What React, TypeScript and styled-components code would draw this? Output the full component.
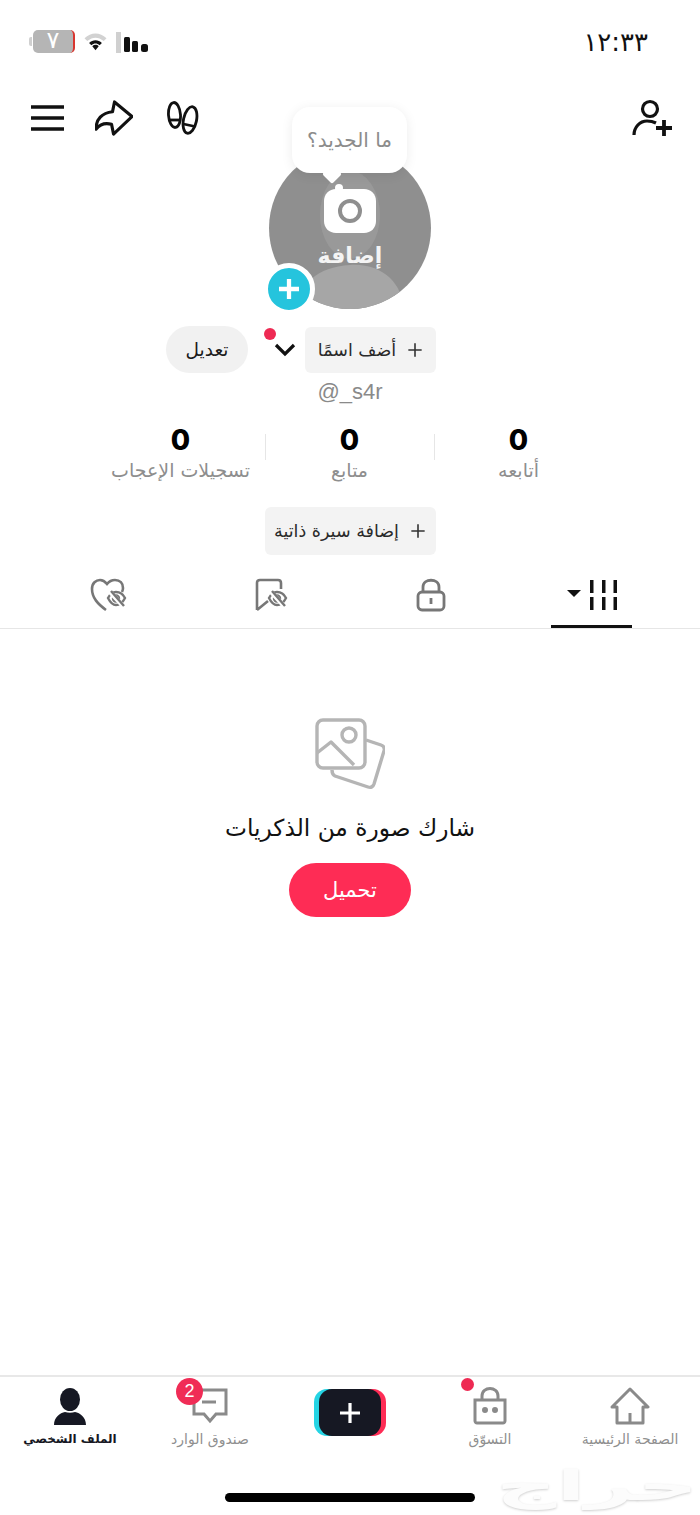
import styled, { createGlobalStyle } from 'styled-components';

const GlobalStyle = createGlobalStyle`
  html, body {
    margin: 0;
    padding: 0;
    background: #fff;
  }
  body {
    font-family: "Liberation Sans", "DejaVu Sans", sans-serif;
  }
`;

const Page = styled.div`
  position: relative;
  width: 700px;
  height: 1515px;
  overflow: hidden;
  display: flex;
  flex-direction: column;
  background: #fff;
`;

const StatusBar = styled.div`
  height: 90px;
  box-sizing: border-box;
  padding: 30px 52px 0 33px;
  display: flex;
  justify-content: space-between;
  align-items: flex-start;
`;

const StatusIcons = styled.div`
  display: flex;
  align-items: center;
  gap: 8px;
`;

const Battery = styled.div`
  position: relative;
  width: 42px;
  height: 23px;
  box-sizing: border-box;
  border-radius: 5px;
  border-right: 2px solid #d8362f;
  background: #b5b5b5;
  color: #fff;
  font-family: "DejaVu Sans", sans-serif;
  font-size: 24px;
  line-height: 20px;
  text-align: center;
  overflow: visible;

  &::before {
    content: '';
    position: absolute;
    left: -4px;
    top: 7px;
    width: 3px;
    height: 9px;
    border-radius: 2px 0 0 2px;
    background: #d0d0d0;
  }
`;

const Clock = styled.div`
  font-family: "DejaVu Sans", sans-serif;
  font-size: 26px;
  line-height: 24px;
  color: #111;
  letter-spacing: 2px;
`;

const TopBar = styled.div`
  height: 56px;
  padding: 0 28px 0 31px;
  display: flex;
  justify-content: space-between;
  align-items: center;
`;

const TopLeft = styled.div`
  display: flex;
  align-items: center;
  gap: 31px;
`;

const Profile = styled.div`
  display: flex;
  flex-direction: column;
  align-items: center;
`;

const AvatarWrap = styled.div`
  position: relative;
  width: 162px;
  height: 162px;
  margin-top: 1px;
`;

const Avatar = styled.div`
  position: relative;
  width: 162px;
  height: 162px;
  border-radius: 50%;
  overflow: hidden;
  background: #8f8f8f;
`;

const Silhouette = styled.svg`
  position: absolute;
  inset: 0;
`;

const AvatarContent = styled.div`
  position: absolute;
  inset: 0;
  padding-top: 36px;
  box-sizing: border-box;
  display: flex;
  flex-direction: column;
  align-items: center;
  gap: 9px;
`;

const AvatarLabel = styled.div`
  font-family: "DejaVu Sans", sans-serif;
  font-size: 22px;
  font-weight: 700;
  line-height: 28px;
  color: #f4f4f4;
`;

const Bubble = styled.div`
  position: absolute;
  top: -40px;
  left: 23px;
  width: 115px;
  height: 66px;
  border-radius: 18px;
  background: #fff;
  box-shadow: 0 2px 12px rgba(0, 0, 0, 0.08);
  display: flex;
  align-items: center;
  justify-content: center;
  font-family: "DejaVu Sans", sans-serif;
  font-size: 20px;
  color: #8c8c8c;
  white-space: nowrap;

  &::after {
    content: '';
    position: absolute;
    left: 33px;
    bottom: -8px;
    width: 14px;
    height: 14px;
    background: #fff;
    transform: rotate(45deg);
    border-radius: 2px;
  }
`;

const AddBadge = styled.div`
  position: absolute;
  left: -6px;
  bottom: -6px;
  width: 52px;
  height: 52px;
  box-sizing: border-box;
  border: 5.5px solid #fff;
  border-radius: 50%;
  background: #25c4dd;
  display: flex;
  align-items: center;
  justify-content: center;
`;

const NameRow = styled.div`
  width: 270px;
  margin-top: 17px;
  margin-right: 98px;
  display: flex;
  align-items: center;
  justify-content: space-between;
`;

const EditPill = styled.div`
  width: 82px;
  height: 47px;
  border-radius: 24px;
  background: #f1f1f1;
  display: flex;
  align-items: center;
  justify-content: center;
  font-family: "DejaVu Sans", sans-serif;
  font-size: 18.5px;
  font-weight: 500;
  color: #1a1a1a;
`;

const Chevron = styled.div`
  position: relative;
  width: 22px;
  height: 16px;
  margin-left: 26px;
  margin-right: 9px;

  &::before {
    content: '';
    position: absolute;
    left: -10px;
    top: -14px;
    width: 12px;
    height: 12px;
    border-radius: 50%;
    background: #ee2a53;
  }
`;

const Chip = styled.div<{ $width: number; $height: number }>`
  width: ${({ $width }) => $width}px;
  height: ${({ $height }) => $height}px;
  box-sizing: border-box;
  border-radius: 6px;
  background: #f3f3f3;
  display: flex;
  align-items: center;
  justify-content: center;
  gap: 11px;
  font-family: "DejaVu Sans", sans-serif;
  font-size: 17.5px;
  color: #2a2a2a;
  white-space: nowrap;
`;

const Handle = styled.div`
  margin-top: 6px;
  font-size: 22px;
  line-height: 26px;
  color: #8a8a8a;
`;

const Stats = styled.div`
  margin-top: 19px;
  margin-right: 1px;
  display: grid;
  grid-template-columns: repeat(3, 169px);
  justify-content: center;
`;

const Stat = styled.div`
  position: relative;
  display: flex;
  flex-direction: column;
  align-items: center;

  & + &::before {
    content: '';
    position: absolute;
    left: 0;
    top: 10px;
    width: 1px;
    height: 26px;
    background: #e6e6e6;
  }
`;

const StatValue = styled.div`
  font-family: Inter, "Liberation Sans", sans-serif;
  font-size: 28px;
  font-weight: 800;
  line-height: 32px;
  color: #000;
`;

const StatLabel = styled.div`
  font-family: "DejaVu Sans", sans-serif;
  font-size: 19px;
  line-height: 28px;
  color: #8e8e8e;
  white-space: nowrap;
`;

const BioWrap = styled.div`
  margin-top: 23px;
`;

const Tabs = styled.div`
  margin-top: 19px;
  height: 54px;
  padding: 0 28px;
  border-bottom: 1px solid #e6e6e6;
  display: grid;
  grid-template-columns: repeat(4, 161px);
`;

const Tab = styled.div<{ $active?: boolean; $offset?: number }>`
  position: relative;
  display: flex;
  align-items: center;
  justify-content: center;
  padding-bottom: 12px;
  padding-left: ${({ $offset }) => $offset ?? 0}px;

  ${({ $active }) =>
    $active &&
    `
    &::after {
      content: '';
      position: absolute;
      left: 40px;
      bottom: 0;
      width: 81px;
      height: 3px;
      background: #111;
    }
  `}
`;

const Empty = styled.div`
  flex: 1;
  padding-top: 89px;
  display: flex;
  flex-direction: column;
  align-items: center;
`;

const EmptyTitle = styled.div`
  margin-top: 20px;
  font-family: "DejaVu Sans", sans-serif;
  font-size: 23.3px;
  line-height: 36px;
  color: #111;
`;

const UploadButton = styled.div`
  margin-top: 17px;
  width: 122px;
  height: 54px;
  border-radius: 27px;
  background: #fe2c55;
  color: #fff;
  display: flex;
  align-items: center;
  justify-content: center;
  font-family: "DejaVu Sans", sans-serif;
  font-size: 21px;
`;

const BottomNav = styled.div`
  height: 140px;
  box-sizing: border-box;
  border-top: 2px solid #e8e8e8;
  display: grid;
  grid-template-columns: repeat(5, 140px);
`;

const NavItem = styled.div<{ $active?: boolean }>`
  position: relative;
  padding-top: 9px;
  display: flex;
  flex-direction: column;
  align-items: center;
  color: ${({ $active }) => ($active ? '#161823' : '#8f8f8f')};
`;

const NavIcon = styled.div`
  position: relative;
  height: 40px;
  display: flex;
  align-items: center;
  justify-content: center;
`;

const NavLabel = styled.div<{ $active?: boolean }>`
  margin-top: 2px;
  font-family: "DejaVu Sans", sans-serif;
  font-size: ${({ $active }) => ($active ? 12 : 14)}px;
  font-weight: ${({ $active }) => ($active ? 700 : 400)};
  line-height: 22px;
  white-space: nowrap;
`;

const CreateButton = styled.div`
  margin-top: 3px;
  width: 62px;
  height: 47px;
  border-radius: 13px;
  background: #161823;
  box-shadow: -5px 0 0 #25d4e4, 5px 0 0 #fe2c55;
  display: flex;
  align-items: center;
  justify-content: center;
`;

const CountBadge = styled.div`
  position: absolute;
  left: -16px;
  top: -8px;
  width: 27px;
  height: 27px;
  border-radius: 50%;
  background: #f02c56;
  color: #fff;
  font-size: 18px;
  font-weight: 500;
  line-height: 27px;
  text-align: center;
`;

const NavDot = styled.div`
  position: absolute;
  left: -12px;
  top: -8px;
  width: 13px;
  height: 13px;
  border-radius: 50%;
  background: #ee2a53;
`;

const HomeIndicator = styled.div`
  position: absolute;
  left: 225px;
  top: 1493px;
  width: 250px;
  height: 9px;
  border-radius: 5px;
  background: #000;
`;

const Watermark = styled.div`
  position: absolute;
  left: 502px;
  top: 1456px;
  width: 190px;
  text-align: center;
  font-family: "DejaVu Sans", sans-serif;
  font-size: 48px;
  font-weight: 700;
  line-height: 60px;
  color: #fcfcfc;
  text-shadow: 0 1px 2px #cfcfcf;
  transform: scale(1.75, 0.85);
`;

const Plus = ({ size = 16, color = '#333', width = 1.8 }: { size?: number; color?: string; width?: number }) => (
  <svg width={size} height={size} viewBox="0 0 18 18" fill="none" stroke={color} strokeWidth={width}>
    <path d="M9 1.5v15M1.5 9h15" />
  </svg>
);

const Scribble = ({ x, y }: { x: number; y: number }) => (
  <g transform={`translate(${x} ${y})`} stroke="#777" strokeWidth="2.4" fill="#fff">
    <path d="M0 7c3-5 6-7 9-7 4 0 7 3 10 7-3 5-6 8-10 8-3 0-7-3-9-8z" stroke="none" />
    <path d="M1 7c2-4 5-6 8-6s7 2 9 6c-2 4-5 7-9 7s-6-3-8-7z" />
    <circle cx="9" cy="7.5" r="3" />
    <path d="M3 1l13 14" stroke="#fff" strokeWidth="4.5" />
    <path d="M4 0l13 15" />
  </g>
);

export default function App() {
  return (
    <Page>
      <GlobalStyle />
      <StatusBar>
        <StatusIcons>
          <Battery>٧</Battery>
          <svg width="25" height="22" viewBox="0 0 26 24">
            <path d="M1 8c7-7 17-7 24 0l-3 3C16 6 10 6 4 11z" fill="#d2d2d2" />
            <path d="M6 13c4-4 10-4 14 0l-2.500 2.500c-3-2.500-6-2.500-9 0z" fill="#111" />
            <path d="M9.500 16.500c2-2 5-2 7 0L13 21z" fill="#111" />
          </svg>
          <svg width="33" height="22" viewBox="0 0 33 22">
            <rect x="0" y="1" width="5" height="21" fill="#d0d0d0" />
            <rect x="8" y="6" width="6" height="15" rx="1.500" fill="#111" />
            <rect x="16" y="10" width="6" height="11" rx="1.500" fill="#111" />
            <rect x="25" y="13" width="7" height="8" rx="2.500" fill="#111" />
          </svg>
        </StatusIcons>
        <Clock>١٢:٣٣</Clock>
      </StatusBar>

      <TopBar>
        <TopLeft>
          <svg width="33" height="26" viewBox="0 0 33 26" stroke="#111" strokeWidth="3.600">
            <path d="M0 2h33M0 13h33M0 24h33" />
          </svg>
          <svg width="38" height="36" viewBox="0 0 39 37" fill="none" stroke="#111" strokeWidth="3.200" strokeLinejoin="round">
            <path d="M20 2l18 15-19 18-2-10c-7-2-12 0-16 5 0-10 6-17 17-18z" />
          </svg>
          <svg width="36" height="34" viewBox="0 0 36 34" fill="none" stroke="#111" strokeWidth="2.800">
            <ellipse cx="10.500" cy="14" rx="6" ry="12.500" transform="rotate(-4 10.500 14)" />
            <path d="M5 19h11" />
            <ellipse cx="26" cy="19" rx="6.500" ry="13.500" transform="rotate(12 26 19)" />
            <path d="M19.500 23l11.500 2.500" />
          </svg>
        </TopLeft>
        <svg width="40" height="38" viewBox="0 0 40 38" fill="none" stroke="#111" strokeWidth="3.200">
          <circle cx="18" cy="10" r="7.500" />
          <path d="M2 36c0-8 6-14 13-14 4 0 7 1 9 2" />
          <path d="M32 21v16M24 29h16" strokeWidth="3.800" />
        </svg>
      </TopBar>

      <Profile>
        <AvatarWrap>
          <Avatar>
            <Silhouette width="162" height="162" viewBox="0 0 162 162">
              <ellipse cx="81" cy="68" rx="30" ry="44" fill="#999" />
              <path d="M28 162c2-25 20-42 53-44s52 19 54 44z" fill="#a6a6a6" />
            </Silhouette>
            <AvatarContent>
              <svg width="52" height="50" viewBox="0 0 52 50">
                <circle cx="15" cy="5" r="4" fill="#fff" />
                <path d="M12 6h28c7 0 12 5 12 12v20c0 7-5 12-12 12H12C5 50 0 45 0 38V18C0 11 5 6 12 6z" fill="#fff" />
                <circle cx="26" cy="28" r="10" fill="none" stroke="#8f8f8f" strokeWidth="4" />
              </svg>
              <AvatarLabel>إضافة</AvatarLabel>
            </AvatarContent>
          </Avatar>
          <Bubble>ما الجديد؟</Bubble>
          <AddBadge>
            <Plus size={24} color="#fff" width={3.200} />
          </AddBadge>
        </AvatarWrap>

        <NameRow>
          <EditPill>تعديل</EditPill>
          <Chevron>
            <svg width="22" height="16" viewBox="0 0 22 16" fill="none" stroke="#111" strokeWidth="3.200">
              <path d="M2 3l9 9 9-9" />
            </svg>
          </Chevron>
          <Chip $width={131} $height={46}>
            <span>أضف اسمًا</span>
            <Plus />
          </Chip>
        </NameRow>

        <Handle>@_s4r</Handle>

        <Stats>
          <Stat>
            <StatValue>0</StatValue>
            <StatLabel>تسجيلات الإعجاب</StatLabel>
          </Stat>
          <Stat>
            <StatValue>0</StatValue>
            <StatLabel>متابع</StatLabel>
          </Stat>
          <Stat>
            <StatValue>0</StatValue>
            <StatLabel>أتابعه</StatLabel>
          </Stat>
        </Stats>

        <BioWrap>
          <Chip $width={171} $height={48}>
            <span>إضافة سيرة ذاتية</span>
            <Plus />
          </Chip>
        </BioWrap>
      </Profile>

      <Tabs>
        <Tab>
          <svg width="38" height="34" viewBox="0 0 38 34" fill="none" stroke="#777" strokeWidth="2.600">
            <path d="M16 32C8 26 2 20 2 11 2 5 6 2 10 2c3 0 5 1.500 7 4 2-2.500 4-4 8-4 5 0 8 3 8 8 0 2-.5 3-1 4" />
            <Scribble x={17} y={13} />
          </svg>
        </Tab>
        <Tab $offset={6}>
          <svg width="36" height="34" viewBox="0 0 36 34" fill="none" stroke="#777" strokeWidth="2.600">
            <path d="M2 32V5c0-2 1-3 3-3h18c2 0 3 1 3 3v6M2 32l11-9" />
            <Scribble x={13} y={13} />
          </svg>
        </Tab>
        <Tab>
          <svg width="30" height="34" viewBox="0 0 30 34" fill="none" stroke="#777" strokeWidth="2.800">
            <rect x="2" y="14" width="26" height="18" rx="4" />
            <path d="M7 14V9c0-9 16-9 16 0v5" />
            <path d="M15 20v6" />
          </svg>
        </Tab>
        <Tab $active>
          <svg width="50" height="32" viewBox="0 0 50 32" fill="#111">
            <path d="M0 11h14l-7 7z" />
            <rect x="23" y="1" width="3.500" height="13" />
            <rect x="35" y="1" width="3.500" height="13" />
            <rect x="46.500" y="1" width="3.500" height="13" />
            <rect x="23" y="18" width="3.500" height="13" />
            <rect x="35" y="18" width="3.500" height="13" />
            <rect x="46.500" y="18" width="3.500" height="13" />
          </svg>
        </Tab>
      </Tabs>

      <Empty>
        <svg width="70" height="72" viewBox="0 0 70 72" fill="none" stroke="#b5b5b5" strokeWidth="3.400" strokeLinejoin="round">
          <path d="M51 22l15 5c3 1 4 3 3 6L59 66c-1 3-3 4-6 3L20 58c-2-1-3-3-3-6" />
          <rect x="2" y="2" width="48" height="48" rx="6" fill="#fff" />
          <circle cx="34" cy="17" r="7" />
          <path d="M2 35l14-11 23 23" />
        </svg>
        <EmptyTitle>شارك صورة من الذكريات</EmptyTitle>
        <UploadButton>تحميل</UploadButton>
      </Empty>

      <BottomNav>
        <NavItem $active>
          <NavIcon>
            <svg width="32" height="37" viewBox="0 0 32 37" fill="#161823">
              <ellipse cx="16" cy="11.500" rx="10" ry="11.500" />
              <path d="M0 37c0-8 6-12 11-13 3 1 7 1 10 0 5 1 11 5 11 13z" />
            </svg>
          </NavIcon>
          <NavLabel $active>الملف الشخصي</NavLabel>
        </NavItem>
        <NavItem>
          <NavIcon>
            <svg width="36" height="36" viewBox="0 0 36 36" fill="none" stroke="#8a8a8a" strokeWidth="3">
              <path d="M2 2h32v24H24l-6 7-6-7H2z" />
              <path d="M10 14h14" />
            </svg>
            <CountBadge>2</CountBadge>
          </NavIcon>
          <NavLabel>صندوق الوارد</NavLabel>
        </NavItem>
        <NavItem>
          <CreateButton>
            <Plus size={24} color="#fff" width={2.400} />
          </CreateButton>
        </NavItem>
        <NavItem>
          <NavIcon>
            <svg width="34" height="38" viewBox="0 0 34 38" fill="none" stroke="#8a8a8a" strokeWidth="3">
              <path d="M2 13h30v21c0 1-1 2-2 2H4c-1 0-2-1-2-2z" />
              <path d="M9 13V9c0-10 16-10 16 0v4" />
              <circle cx="12" cy="23" r="1.500" fill="#8a8a8a" />
              <circle cx="22" cy="23" r="1.500" fill="#8a8a8a" />
            </svg>
            <NavDot />
          </NavIcon>
          <NavLabel>التسوّق</NavLabel>
        </NavItem>
        <NavItem>
          <NavIcon>
            <svg width="40" height="38" viewBox="0 0 40 38" fill="none" stroke="#8a8a8a" strokeWidth="3" strokeLinejoin="round">
              <path d="M2 20L20 2l18 18h-5v16H7V20z" />
              <path d="M20 36V26" />
            </svg>
          </NavIcon>
          <NavLabel>الصفحة الرئيسية</NavLabel>
        </NavItem>
      </BottomNav>

      <Watermark>حراج</Watermark>
      <HomeIndicator />
    </Page>
  );
}
